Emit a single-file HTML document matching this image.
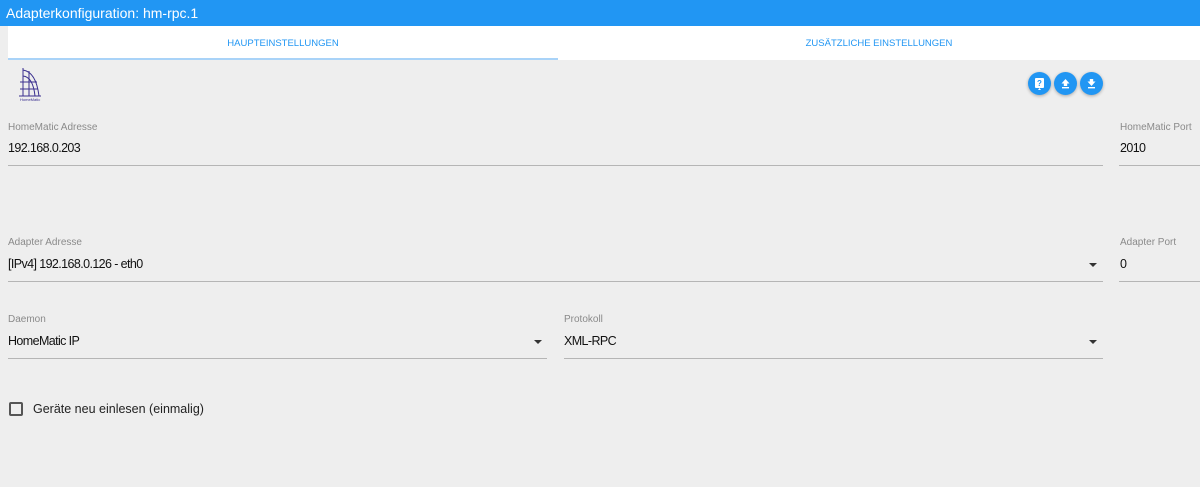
<!DOCTYPE html>
<html><head><meta charset="utf-8"><style>
*{box-sizing:border-box;margin:0;padding:0}
body{width:1200px;height:487px;background:#eeeeee;font-family:"Liberation Sans",sans-serif;position:relative;overflow:hidden}
.hdr{position:absolute;left:0;top:0;width:1200px;height:26px;background:#2196f3;color:#fff;font-size:14px;line-height:26px;padding-left:6px}
.tabs{position:absolute;left:8px;top:26px;width:1192px;height:34px;background:#fff}
.tab{position:absolute;top:0;height:34px;line-height:36px;font-size:9.5px;color:#2196f3;text-align:center;width:550px}
.ind{position:absolute;left:0;top:32px;width:550px;height:2px;background:#a9d3f8}
.lbl{position:absolute;font-size:10px;color:#8a8a8a}
.val{position:absolute;font-size:12.5px;color:#111;letter-spacing:-0.6px}
.ul{position:absolute;height:1px;background:#b5b5b5}
.arr{position:absolute;width:0;height:0;border-left:4px solid transparent;border-right:4px solid transparent;border-top:4px solid #333}
.btn{position:absolute;top:72px;width:23px;height:23px;border-radius:50%;background:#2196f3;box-shadow:0 1px 3px rgba(0,0,0,.3)}
.btn svg{position:absolute;left:5px;top:5px}
.cb{position:absolute;left:9px;top:402px;width:14px;height:14px;border:2px solid #555;border-radius:2px}
</style></head><body>
<div class="hdr">Adapterkonfiguration: hm-rpc.1</div>
<div class="tabs">
<div class="tab" style="left:0">HAUPTEINSTELLUNGEN</div>
<div class="tab" style="left:550px;width:642px;color:#2196f3">ZUSÄTZLICHE EINSTELLUNGEN</div>
<div class="ind"></div>
</div>
<svg style="position:absolute;left:18px;top:66px" width="26" height="36" viewBox="0 0 26 36">
<g fill="none" stroke="#3a2f8f" stroke-width="1">
<path d="M5 2 L5 30"/><path d="M5 4 Q18 6 21 30"/><path d="M5 10 Q15 11 17 30"/><path d="M11 5 L11 30"/><path d="M2 16 L19 16"/><path d="M2 23 L20 23"/><path d="M1 30 L23 30"/>
</g>
<text x="2" y="35" font-size="4" fill="#3a2f8f" font-family="Liberation Sans">HomeMatic</text>
</svg>
<div class="btn" style="left:1028px"><svg width="13" height="13" viewBox="0 0 13 13"><rect x="2" y="1" width="9" height="10" rx="1" fill="#fff"/><path d="M5 13 L6.5 11 L8 13Z" fill="#fff"/><text x="6.5" y="9" font-size="8" font-weight="bold" text-anchor="middle" fill="#2196f3" font-family="Liberation Sans">?</text></svg></div>
<div class="btn" style="left:1054px"><svg width="13" height="13" viewBox="0 0 13 13"><path d="M6.5 2 L10.5 6.5 H8.2 V9 H4.8 V6.5 H2.5Z" fill="#fff"/><rect x="3" y="10" width="7" height="1.4" fill="#fff"/></svg></div>
<div class="btn" style="left:1080px"><svg width="13" height="13" viewBox="0 0 13 13"><path d="M6.5 9 L10.5 4.5 H8.2 V2 H4.8 V4.5 H2.5Z" fill="#fff"/><rect x="3" y="10" width="7" height="1.4" fill="#fff"/></svg></div>

<div class="lbl" style="left:8px;top:122px">HomeMatic Adresse</div>
<div class="val" style="left:8px;top:141px">192.168.0.203</div>
<div class="ul" style="left:8px;top:165px;width:1095px"></div>
<div class="lbl" style="left:1120px;top:122px">HomeMatic Port</div>
<div class="val" style="left:1120px;top:141px">2010</div>
<div class="ul" style="left:1119px;top:165px;width:81px"></div>

<div class="lbl" style="left:8px;top:237px">Adapter Adresse</div>
<div class="val" style="left:8px;top:257px">[IPv4] 192.168.0.126 - eth0</div>
<div class="arr" style="left:1089px;top:263px"></div>
<div class="ul" style="left:8px;top:281px;width:1095px"></div>
<div class="lbl" style="left:1120px;top:237px">Adapter Port</div>
<div class="val" style="left:1120px;top:257px">0</div>
<div class="ul" style="left:1119px;top:281px;width:81px"></div>

<div class="lbl" style="left:8px;top:314px">Daemon</div>
<div class="val" style="left:8px;top:334px">HomeMatic IP</div>
<div class="arr" style="left:534px;top:340px"></div>
<div class="ul" style="left:8px;top:358px;width:539px"></div>
<div class="lbl" style="left:564px;top:314px">Protokoll</div>
<div class="val" style="left:564px;top:334px">XML-RPC</div>
<div class="arr" style="left:1089px;top:340px"></div>
<div class="ul" style="left:564px;top:358px;width:539px"></div>

<div class="cb"></div>
<div class="val" style="left:33px;top:402px;font-size:12.5px;color:#222;letter-spacing:0">Geräte neu einlesen (einmalig)</div>
</body></html>
